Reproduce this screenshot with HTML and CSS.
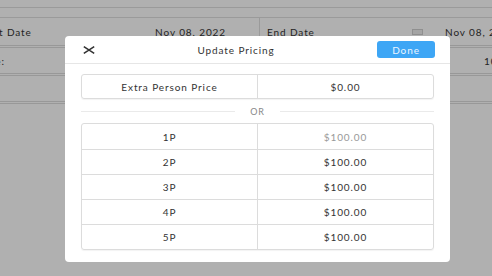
FILE: index.html
```html
<!DOCTYPE html>
<html>
<head>
    <meta charset="UTF-8">
    <title>Update Pricing</title>
    <link rel="stylesheet" href="styles.css">
</head>
<body>
    <div class="page">
        <div class="top-bar"></div>
        <div class="sub-bar"></div>
        <div class="info-row">
            <div class="info-cell">
                <span class="info-label">Start Date</span>
                <span class="info-value">Nov 08, 2022</span>
            </div>
            <div class="info-cell right">
                <span class="info-label">End Date</span>
                <span class="cal-icon"></span>
                <span class="info-value">Nov 08, 2022</span>
            </div>
        </div>
        <div class="info-row short">
            <div class="info-cell">
                <span class="info-label">Rate:</span>
            </div>
            <div class="info-cell right">
                <span class="info-value far">100</span>
            </div>
        </div>
        <div class="info-row short"></div>
    </div>

    <div class="overlay">
        <div class="modal">
            <div class="modal-header">
                <button class="close-btn" aria-label="Close">
                    <svg width="12" height="8" viewBox="0 0 12 8">
                        <path d="M0.8 0.6 L11.2 7.4 M11.2 0.6 L0.8 7.4" stroke="#333" stroke-width="1.5" fill="none"/>
                    </svg>
                </button>
                <div class="modal-title">Update Pricing</div>
                <button class="done-btn">Done</button>
            </div>
            <div class="modal-body">
                <div class="price-table">
                    <div class="price-row tall">
                        <div class="price-cell">Extra Person Price</div>
                        <div class="price-cell">$0.00</div>
                    </div>
                </div>
                <div class="or-sep"><span>OR</span></div>
                <div class="price-table">
                    <div class="price-row">
                        <div class="price-cell">1P</div>
                        <div class="price-cell placeholder">$100.00</div>
                    </div>
                    <div class="price-row">
                        <div class="price-cell">2P</div>
                        <div class="price-cell">$100.00</div>
                    </div>
                    <div class="price-row">
                        <div class="price-cell">3P</div>
                        <div class="price-cell">$100.00</div>
                    </div>
                    <div class="price-row">
                        <div class="price-cell">4P</div>
                        <div class="price-cell">$100.00</div>
                    </div>
                    <div class="price-row">
                        <div class="price-cell">5P</div>
                        <div class="price-cell">$100.00</div>
                    </div>
                </div>
            </div>
        </div>
    </div>
</body>
</html>
```

FILE: styles.css
```css
html, body {
    margin: 0;
    padding: 0;
}
body {
    font-family: Lato, "Noto Sans", sans-serif;
    background-color: #fff;
    width: 492px;
    height: 276px;
    overflow: hidden;
    position: relative;
    color: #333;
    letter-spacing: 0.9px;
}
.page {
    margin-left: -22px;
    width: 600px;
}
.top-bar {
    height: 7px;
    border-bottom: 1px solid #e0e0e0;
}
.sub-bar {
    height: 9px;
    border-bottom: 1px solid #e0e0e0;
}
.info-row {
    display: flex;
    height: 27px;
    border-bottom: 3px double #dcdcdc;
}
.info-row.short {
    height: 25px;
}
.info-cell {
    flex: 0 0 281px;
    display: flex;
    align-items: center;
    font-size: 10px;
    box-sizing: border-box;
    white-space: nowrap;
}
.info-cell.right {
    flex: 0 0 300px;
    border-left: 1px solid #e0e0e0;
    padding-left: 7px;
}
.info-label {
    flex: 1;
}
.info-value {
    margin-right: 33px;
}
.info-cell.right .info-label {
    flex: none;
    width: 145px;
}
.info-cell.right .info-value {
    margin-right: 0;
}
.info-value.far {
    margin-left: 217px;
}
.cal-icon {
    width: 9px;
    height: 4px;
    border: 1px solid #d0d0d0;
    background: #eee;
    margin-right: 22px;
}
.overlay {
    position: absolute;
    inset: 0;
    background-color: rgba(0, 0, 0, 0.31);
    padding: 36px 0 0 65px;
}
.modal {
    width: 385px;
    height: 226px;
    background-color: #fff;
    border-radius: 4px;
    box-sizing: border-box;
}
.modal-header {
    height: 28px;
    display: flex;
    align-items: center;
    padding: 0 15px 0 18px;
    border-bottom: 1px solid #e6e6e6;
    box-sizing: border-box;
}
.close-btn {
    border: none;
    background: none;
    padding: 0;
    width: 12px;
    height: 8px;
    display: flex;
}
.modal-title {
    flex: 1;
    text-align: center;
    font-size: 10px;
    color: #333;
}
.done-btn {
    width: 58px;
    height: 17px;
    border: none;
    border-radius: 3px;
    background-color: #3ea6f5;
    color: #eaf5ff;
    font-family: inherit;
    font-size: 10px;
    letter-spacing: 0.9px;
    padding: 0;
}
.modal-body {
    padding: 10px 16px 0 16px;
}
.price-table {
    border: 1px solid #dcdcdc;
    border-radius: 3px;
    box-shadow: 0 1px 1px rgba(0,0,0,0.05);
}
.price-row {
    display: flex;
    height: 24px;
    border-top: 1px solid #dcdcdc;
}
.price-row:first-child {
    border-top: none;
    height: 25px;
}
.price-table .price-row.tall {
    height: 23px;
}
.price-cell {
    flex: 1;
    display: flex;
    align-items: center;
    justify-content: center;
    font-size: 10px;
    color: #333;
}
.price-cell + .price-cell {
    border-left: 1px solid #dcdcdc;
}
.price-cell.placeholder {
    color: #999;
}
.or-sep {
    height: 24px;
    display: flex;
    align-items: center;
    justify-content: center;
    font-size: 9px;
    color: #888;
}
.or-sep::before,
.or-sep::after {
    content: "";
    flex: 1;
    border-top: 1px solid #eaeaea;
}
.or-sep span {
    padding: 0 15px;
}
```
